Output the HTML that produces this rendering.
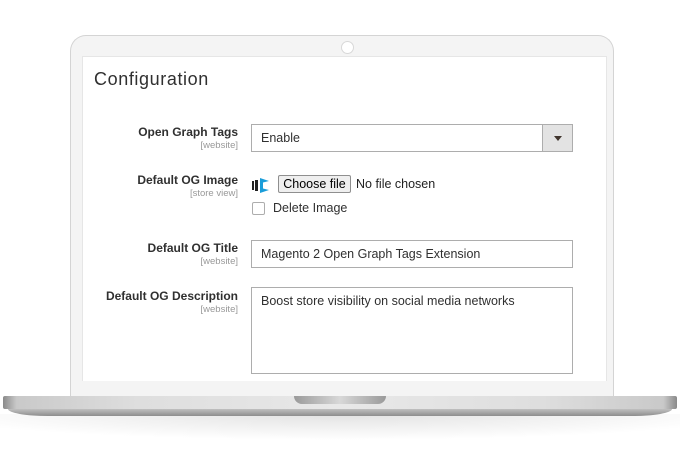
<!DOCTYPE html>
<html><head><style>
body{margin:0;width:680px;height:450px;background:#fff;position:relative;overflow:hidden;font-family:"Liberation Sans",sans-serif;color:#303030}
.lid{position:absolute;left:70px;top:35px;width:544px;height:370px;background:#f4f4f4;border:1px solid #d4d4d4;border-bottom:none;border-radius:16px 16px 0 0;box-sizing:border-box}
.cam{position:absolute;left:341px;top:41px;width:11px;height:11px;border-radius:50%;background:#fff;border:1px solid #d8d8d8}
.scr{position:absolute;left:82px;top:56px;width:523px;height:324px;background:#fff;border:1px solid #e6e6e6;border-bottom:none}
.base{position:absolute;left:3px;top:396px;width:674px;height:13px;background:linear-gradient(90deg,#8a8a8a 0%,#c9c9c9 2%,#dedede 20%,#e8e8e8 50%,#dedede 80%,#c9c9c9 98%,#8a8a8a 100%);border-radius:2px}
.base2{position:absolute;left:8px;top:409px;width:664px;height:7px;background:linear-gradient(#c0c0c0,#8d8d8d);border-radius:0 0 40px 40px/0 0 7px 7px}
.shadow{position:absolute;left:0;top:414px;width:680px;height:26px;background:radial-gradient(ellipse 60% 100% at 50% 0,#e2e2e2,#fff)}
.notch{position:absolute;left:294px;top:396px;width:92px;height:8px;background:linear-gradient(90deg,#9a9a9a,#d8d8d8 50%,#9a9a9a);border-radius:0 0 8px 8px}
h1{position:absolute;left:94px;top:69px;margin:0;font-size:18px;font-weight:normal;color:#303030;letter-spacing:.6px}
.lbl{position:absolute;right:442px;text-align:right;font-size:12px;font-weight:bold;color:#303030;white-space:nowrap}
.lbl small{display:block;font-size:9.5px;font-weight:normal;color:#999;margin-top:1px}
.inp{position:absolute;left:251px;width:322px;height:28px;border:1px solid #adadad;box-sizing:border-box;font-size:12.5px;padding:6px 9px;color:#303030}
.dd{position:absolute;right:0;top:0;width:29px;height:26px;background:#e3e3e3;border-left:1px solid #adadad}
.dd:after{content:"";position:absolute;left:11px;top:11px;border:4px solid transparent;border-top:5px solid #41362f}
.file{position:absolute;left:278px;top:175px;width:73px;height:18px;border:1px solid #8f8f8f;border-radius:2px;background:#efefef;box-sizing:border-box;font-size:12.5px;text-align:center;line-height:16px;color:#000}
.nf{position:absolute;left:356px;top:177px;font-size:12.5px;color:#222}
.cb{position:absolute;left:252px;top:202px;width:13px;height:13px;border:1px solid #adadad;border-radius:2px;box-sizing:border-box}
.di{position:absolute;left:273px;top:201px;font-size:12.5px;color:#303030}
</style></head><body>
<div class="lid"></div><div class="cam"></div>
<div class="scr"></div>
<div class="shadow"></div>
<div class="base"></div><div class="base2"></div><div class="notch"></div>
<h1>Configuration</h1>
<div class="lbl" style="top:125px">Open Graph Tags<small>[website]</small></div>
<div class="inp" style="top:124px">Enable<div class="dd"></div></div>
<div class="lbl" style="top:173px">Default OG Image<small>[store view]</small></div>
<svg style="position:absolute;left:252px;top:177px" width="18" height="17" viewBox="0 0 18 17"><rect x="0" y="4" width="2" height="9" fill="#222"/><rect x="3" y="3" width="3" height="11" fill="#222"/><path d="M8 1 L17 4 L11 5.5 L11 11.5 L17 13 L8 16 Z" fill="#1a9dd9"/></svg>
<div class="file">Choose file</div><div class="nf">No file chosen</div>
<div class="cb"></div><div class="di">Delete Image</div>
<div class="lbl" style="top:241px">Default OG Title<small>[website]</small></div>
<div class="inp" style="top:240px">Magento 2 Open Graph Tags Extension</div>
<div class="lbl" style="top:289px">Default OG Description<small>[website]</small></div>
<div class="inp" style="top:287px;height:87px">Boost store visibility on social media networks</div>
</body></html>
